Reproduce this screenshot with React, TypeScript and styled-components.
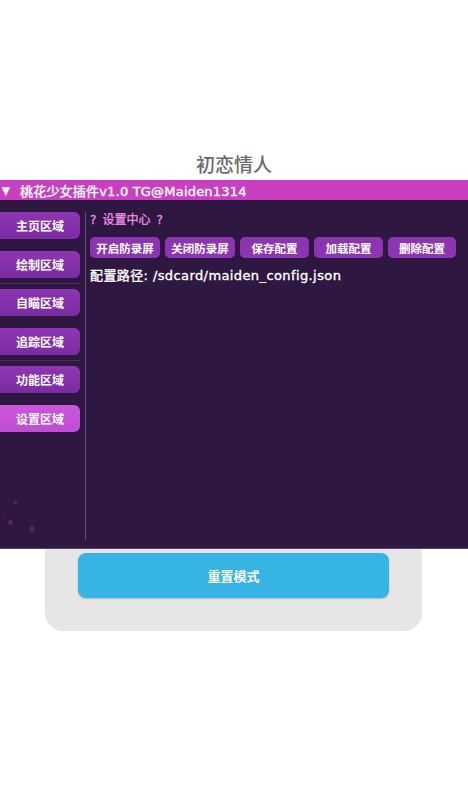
import React from 'react';
import styled, { createGlobalStyle } from 'styled-components';

const GlobalStyle = createGlobalStyle`
  html, body {
    margin: 0;
    padding: 0;
    background: #ffffff;
    font-family: "Noto Sans", "Noto Sans CJK SC", sans-serif;
  }
`;

const Page = styled.div`
  position: relative;
  width: 468px;
  height: 792px;
  overflow: hidden;
  background: #ffffff;
`;

const Title = styled.h1`
  margin: 0;
  padding-top: 151px;
  height: 30px;
  text-align: center;
  font-size: 19px;
  font-weight: 500;
  color: #6a6a6a;
  line-height: 28px;
`;

const Card = styled.div`
  margin: 0 0 0 45px;
  width: 377px;
  height: 450px;
  background: #e6e6e6;
  border-radius: 0 0 18px 18px;
  display: flex;
  flex-direction: column;
  justify-content: flex-end;
  align-items: center;
  padding-bottom: 33px;
  box-sizing: border-box;
`;

const ResetButton = styled.button`
  width: 311px;
  height: 45px;
  border: none;
  border-radius: 8px;
  background: #36b5e5;
  color: #ffffff;
  font-family: inherit;
  font-size: 13px;
  font-weight: 600;
  box-shadow: 0 1px 2px rgba(0, 0, 0, 0.2);
`;

const Overlay = styled.div`
  position: absolute;
  left: 0;
  top: 180px;
  width: 468px;
  height: 369px;
  display: flex;
  flex-direction: column;
  background: #2e1740;
  border-bottom: 1px solid #5d3f70;
  box-sizing: border-box;
  font-family: "DejaVu Sans", "Noto Sans CJK SC", sans-serif;
`;

const TitleBar = styled.div`
  height: 20px;
  background: #c83fbf;
  display: flex;
  align-items: center;
  gap: 8px;
  padding-left: 2px;
  color: #ffffff;
  font-size: 13px;
  letter-spacing: 0.2px;
  -webkit-text-stroke: 0.35px #ffffff;
`;

const Arrow = styled.span`
  font-size: 10px;
  width: 10px;
`;

const Body = styled.div`
  position: relative;
  flex: 1;
  display: flex;
  padding: 12px 0 8px 0;
`;

const Sidebar = styled.div`
  width: 80px;
  display: flex;
  flex-direction: column;
`;

const SideButton = styled.div<{ $active?: boolean }>`
  height: 27px;
  border-radius: 0 6px 6px 0;
  background: ${(p) =>
    p.$active
      ? 'linear-gradient(180deg, #cc56dd, #be4ed3)'
      : 'linear-gradient(180deg, #8e36b3, #7a2ca2)'};
  color: #ffffff;
  font-size: 12px;
  font-weight: 600;
  display: flex;
  align-items: center;
  justify-content: center;
  margin-bottom: 11.6px;
`;

const SideDivider = styled.div`
  height: 1px;
  background: #4d3260;
  margin: -6px 0 5px 0;
`;

const VLine = styled.div`
  width: 1px;
  margin-left: 5px;
  background: #6b4a80;
`;

const Content = styled.div`
  flex: 1;
  padding: 0 0 0 4px;
  display: flex;
  flex-direction: column;
`;

const Header = styled.div`
  display: flex;
  gap: 6px;
  color: #ec90e2;
  font-size: 12px;
  line-height: 16px;
  margin-bottom: 9px;
  -webkit-text-stroke: 0.3px #ec90e2;
`;

const ButtonRow = styled.div`
  display: flex;
  gap: 5px;
  margin-bottom: 10px;
`;

const SmallButton = styled.div<{ $w: number }>`
  width: ${(p) => p.$w}px;
  height: 21px;
  border-radius: 5px;
  background: #8c35b1;
  color: #ffffff;
  font-size: 11.5px;
  font-weight: 600;
  display: flex;
  align-items: center;
  justify-content: center;
`;

const PathText = styled.div`
  color: #ffffff;
  font-size: 13px;
  letter-spacing: 0.4px;
  line-height: 16px;
  -webkit-text-stroke: 0.35px #ffffff;
`;

const Dot = styled.span<{ $x: number; $y: number; $s: number; $o: number }>`
  position: absolute;
  left: ${(p) => p.$x}px;
  top: ${(p) => p.$y}px;
  width: ${(p) => p.$s}px;
  height: ${(p) => p.$s}px;
  border-radius: 50%;
  background: #7a2a8e;
  opacity: ${(p) => p.$o};
`;

const sideItems = ['主页区域', '绘制区域', '自瞄区域', '追踪区域', '功能区域', '设置区域'];
const actions: [string, number][] = [
  ['开启防录屏', 70],
  ['关闭防录屏', 70],
  ['保存配置', 69],
  ['加载配置', 69],
  ['删除配置', 68],
];

export default function App() {
  return (
    <Page>
      <GlobalStyle />
      <Title>初恋情人</Title>
      <Card>
        <ResetButton>重置模式</ResetButton>
      </Card>
      <Overlay>
        <TitleBar>
          <Arrow>▼</Arrow>
          <span>桃花少女插件v1.0 TG@Maiden1314</span>
        </TitleBar>
        <Body>
          <Sidebar>
            {sideItems.map((s, i) => (
              <React.Fragment key={s}>
                <SideButton $active={i === 5}>{s}</SideButton>
                {(i === 1 || i === 3) && <SideDivider />}
              </React.Fragment>
            ))}
          </Sidebar>
          <VLine />
          <Content>
            <Header>
              <span>?</span>
              <span>设置中心</span>
              <span>?</span>
            </Header>
            <ButtonRow>
              {actions.map(([t, w]) => (
                <SmallButton key={t} $w={w}>
                  {t}
                </SmallButton>
              ))}
            </ButtonRow>
            <PathText>配置路径: /sdcard/maiden_config.json</PathText>
          </Content>
          <Dot $x={14} $y={301} $s={3} $o={0.7} />
          <Dot $x={2} $y={316} $s={2} $o={0.5} />
          <Dot $x={8} $y={320} $s={5} $o={0.6} />
          <Dot $x={29} $y={326} $s={6} $o={0.5} />
        </Body>
      </Overlay>
    </Page>
  );
}
